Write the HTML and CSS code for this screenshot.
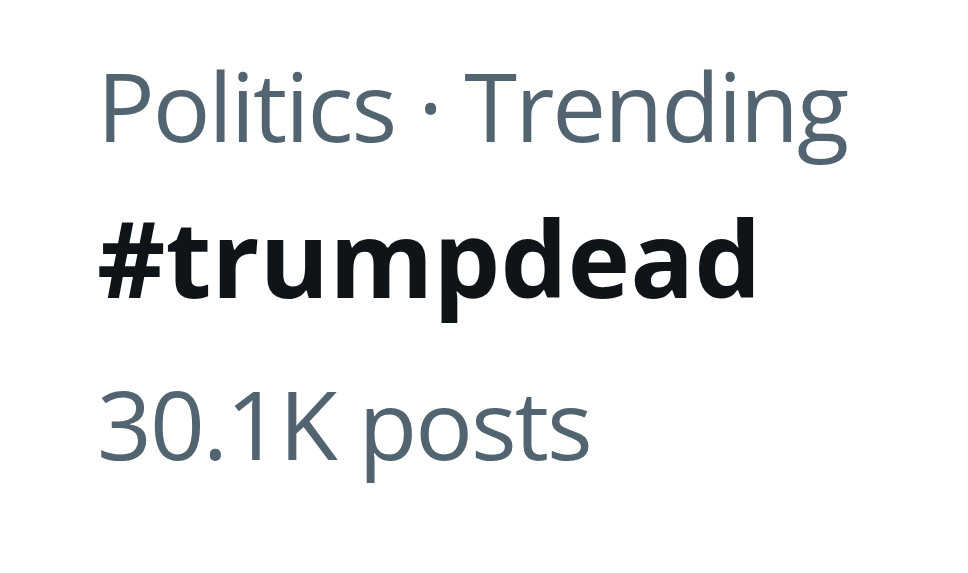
FILE: index.html
```html
<!DOCTYPE html>
<html>
<head>
<meta charset="utf-8">
<link rel="stylesheet" href="styles.css">
</head>
<body>
<div class="trend">
  <div class="meta">Politics · Trending</div>
  <div class="tag">#trumpdead</div>
  <div class="count">30.1K posts</div>
</div>
</body>
</html>
```
FILE: styles.css
```css
html, body {
  margin: 0;
  background: #ffffff;
}
body {
  width: 968px;
  height: 573px;
  overflow: hidden;
}
.trend {
  display: flex;
  flex-direction: column;
  padding: 27px 0 0 97px;
  font-family: "Open Sans", "Noto Sans", sans-serif;
}
.meta, .count {
  color: #536471;
  font-weight: 400;
  font-size: 96px;
  letter-spacing: -2px;
}
.meta {
  line-height: 156px;
}
.tag {
  color: #0f1419;
  font-weight: 700;
  font-size: 106px;
  line-height: 148px;
}
.count {
  line-height: 184px;
}
```
